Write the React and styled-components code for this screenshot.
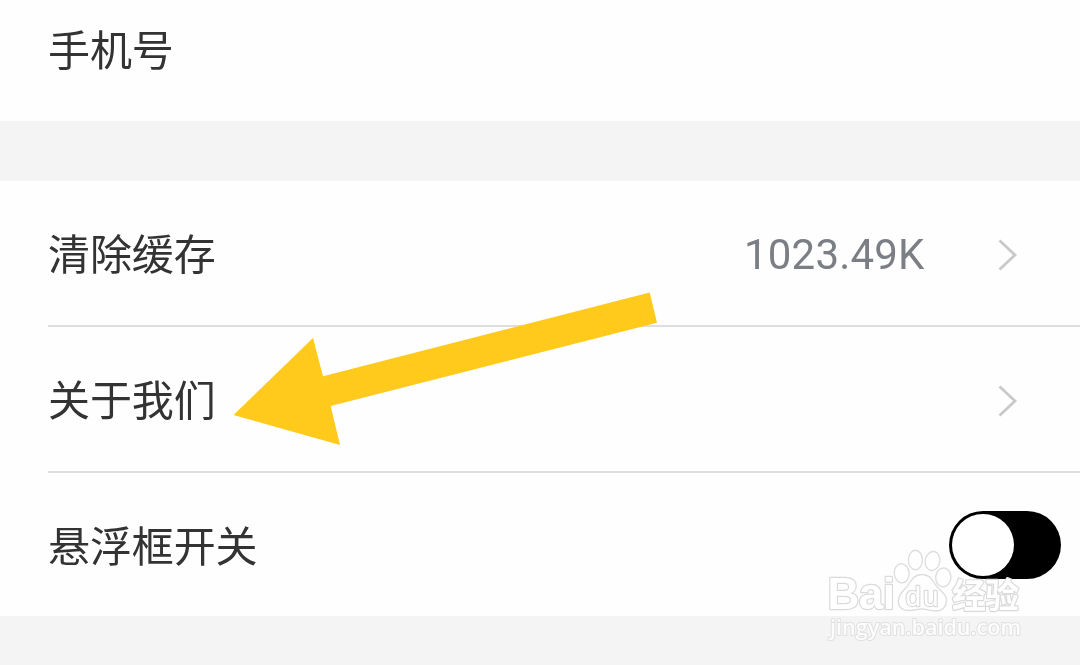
import React, { useState } from 'react';
import styled, { createGlobalStyle } from 'styled-components';

const GlobalStyle = createGlobalStyle`
  body {
    margin: 0;
    overflow: hidden;
    background: #f4f4f4;
    font-family: Roboto, 'Noto Sans CJK SC', sans-serif;
  }
`;

const StyledPage = styled.main`
  position: relative;
  width: 1080px;
  height: 665px;
  overflow: hidden;
  background: #f4f4f4;
`;

const StyledGroup = styled.section`
  margin-bottom: 60px;
  padding-left: 48px;
  background: #fefefe;
`;

const StyledRow = styled.div`
  display: flex;
  align-items: center;
  box-sizing: border-box;
  height: ${({ $height }) => $height}px;
  padding: ${({ $padding }) => $padding || '4px 62px 0 0'};
  border-bottom: ${({ $divided }) => ($divided ? '2px solid #dedede' : 'none')};
`;

const StyledLabel = styled.span`
  flex: 1;
  margin-top: ${({ $shift = -4 }) => $shift}px;
  color: #333;
  font-family: 'Noto Sans CJK SC', sans-serif;
  font-size: 42px;
  font-weight: 400;
  line-height: 60px;
  letter-spacing: -0.1px;
  will-change: transform;
`;

const StyledValue = styled.span`
  margin-right: 73px;
  color: #7b7e84;
  font-family: Roboto, sans-serif;
  font-size: 42px;
  line-height: 60px;
  letter-spacing: 0.2px;
  will-change: transform;
`;

const StyledSwitch = styled.button`
  display: flex;
  justify-content: ${({ $on }) => ($on ? 'flex-end' : 'flex-start')};
  align-items: center;
  width: 112px;
  height: 68px;
  padding: 0 3px;
  border: none;
  border-radius: 34px;
  background: #000;
`;

const StyledKnob = styled.span`
  width: 62px;
  height: 62px;
  border-radius: 50%;
  background: #fff;
`;

const StyledArrow = styled.svg`
  position: absolute;
  top: 285px;
  left: 225px;
`;

const StyledWatermark = styled.svg`
  position: absolute;
  top: 540px;
  left: 820px;
`;

const Chevron = () => (
  <svg width="20" height="32" viewBox="0 0 20 32" fill="none">
    <path d="M1.5 1.5 L17 16 L1.5 30.5" stroke="#c9c9c9" strokeWidth="2.8" />
  </svg>
);

const Arrow = () => (
  <StyledArrow width="440" height="170" viewBox="225 285 440 170">
    <path d="M233.5 415 L313 338 L323 376.3 L649.7 292.5 L657 322.8 L330.7 406 L340 445 Z" fill="#ffca1b" />
  </StyledArrow>
);

const Watermark = () => (
  <StyledWatermark width="220" height="110" viewBox="820 540 220 110">
    <g fill="#fff" fillOpacity="0.7" stroke="#dedede" strokeWidth="1.4">
      <ellipse cx="901.7" cy="573.3" rx="7.4" ry="9.6" transform="rotate(-5 901.7 573.3)" />
      <ellipse cx="915.4" cy="560" rx="7" ry="9.8" />
      <ellipse cx="932.5" cy="561" rx="7.3" ry="9.6" transform="rotate(10 932.5 561)" />
      <ellipse cx="943.3" cy="577.4" rx="7.6" ry="9.4" transform="rotate(5 943.3 577.4)" />
      <path d="M922 574.5 C915 574.5 912 579 909 584 C906 589 898.3 593 898.3 601 C898.3 608 904 611 910 610.5 C915 610 918 609 922 609 C927 609 930 611 936 611 C943 611 946.5 606 946.5 600 C946.5 593 938 590 935 584 C932 579 929 574.5 922 574.5 Z" />
    </g>
    <g
      fill="#fff"
      stroke="#dadada"
      strokeWidth="2.4"
      strokeLinejoin="round"
      paintOrder="stroke"
      fontFamily="'Liberation Sans', Arial, sans-serif"
      fontWeight="700"
    >
      <text x="827.5" y="609" fontSize="44" textLength="67.5">
        Bai
      </text>
      <text x="905.5" y="605.5" fontSize="28" fontWeight="400" textLength="33">
        du
      </text>
      <text x="952" y="608" fontSize="34" fontFamily="'Noto Sans CJK SC', sans-serif" textLength="67">
        经验
      </text>
      <text
        x="830"
        y="635"
        fontSize="22"
        fontWeight="600"
        fontFamily="'Open Sans', sans-serif"
        fillOpacity="0.9"
        stroke="#e0e0e0"
        strokeWidth="2"
        textLength="191"
        lengthAdjust="spacingAndGlyphs"
      >
        jingyan.baidu.com
      </text>
    </g>
  </StyledWatermark>
);

const App = () => {
  const [floating, setFloating] = useState(false);

  return (
    <>
      <GlobalStyle />
      <StyledPage>
        <StyledGroup>
          <StyledRow $height={121} $padding="0 62px 20px 0">
            <StyledLabel $shift={-5}>手机号</StyledLabel>
          </StyledRow>
        </StyledGroup>
        <StyledGroup>
          <StyledRow $height={146} $divided>
            <StyledLabel $shift={-6}>清除缓存</StyledLabel>
            <StyledValue>1023.49K</StyledValue>
            <Chevron />
          </StyledRow>
          <StyledRow $height={146} $divided>
            <StyledLabel $shift={-6}>关于我们</StyledLabel>
            <Chevron />
          </StyledRow>
          <StyledRow $height={143} $padding="1px 19px 0 0">
            <StyledLabel $shift={-2}>悬浮框开关</StyledLabel>
            <StyledSwitch
              role="switch"
              aria-checked={floating}
              $on={floating}
              onClick={() => setFloating(!floating)}
            >
              <StyledKnob />
            </StyledSwitch>
          </StyledRow>
        </StyledGroup>
        <Arrow />
        <Watermark />
      </StyledPage>
    </>
  );
};

export default App;
